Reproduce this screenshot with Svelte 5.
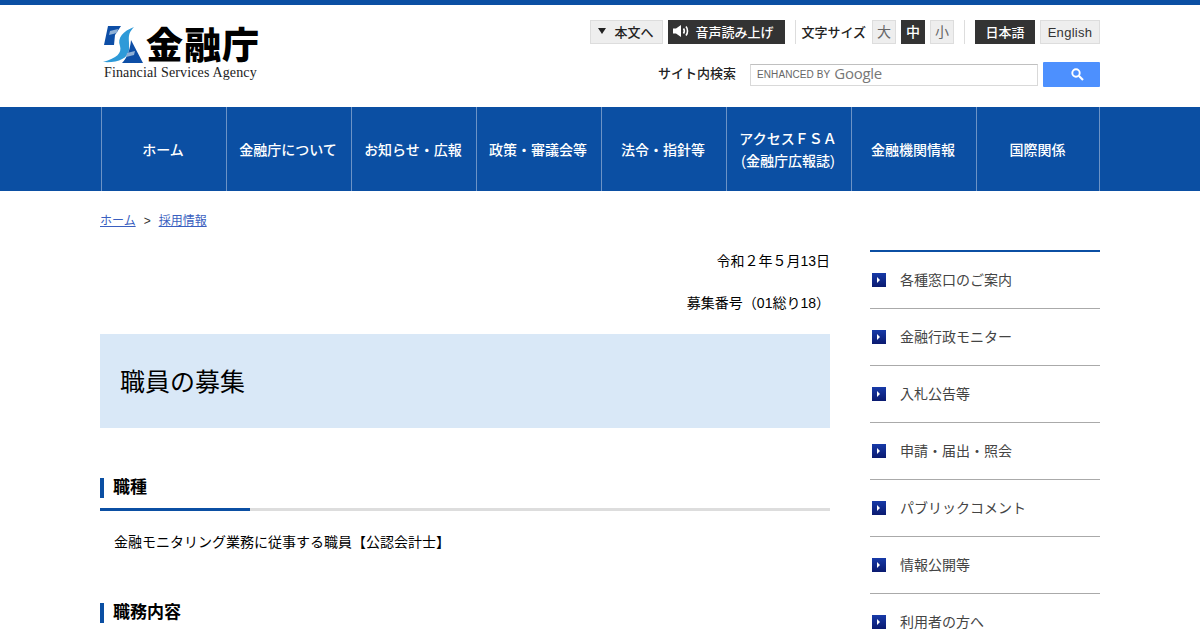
<script>
  const navItems = [
    ['ホーム'],
    ['金融庁について'],
    ['お知らせ・広報'],
    ['政策・審議会等'],
    ['法令・指針等'],
    ['アクセスＦＳＡ', '(金融庁広報誌)'],
    ['金融機関情報'],
    ['国際関係']
  ];

  const sideItems = [
    '各種窓口のご案内',
    '金融行政モニター',
    '入札公告等',
    '申請・届出・照会',
    'パブリックコメント',
    '情報公開等',
    '利用者の方へ'
  ];
</script>

<div class="page">
  <header class="header">
    <div class="logo">
      <svg class="logo-mark" width="42" height="38" viewBox="0 0 42 38">
        <path d="M5 0 H18 L12 9 L11 19 H1 Z" fill="#0d4ea6" />
        <path d="M7 5 L15 3 L14 7 L6 9 Z" fill="#8fb0d6" />
        <path d="M31 1 C20 5 14 12 17 20 C19 27 14 32 0 36 C14 37 25 33 26 24 C27 14 23 9 31 1 Z" fill="#2e9ad8" />
        <path d="M28 14 L40 37 H19 C24 32 27 24 28 14 Z" fill="#0d4ea6" />
        <path d="M24 27 L32 25 L31 29 L23 31 Z" fill="#8fb0d6" />
      </svg>
      <div class="logo-kanji">金融庁</div>
      <div class="logo-en">Financial Services Agency</div>
    </div>

    <div class="tools">
      <div class="tool-row">
        <a class="btn skip"><span class="tri"></span>本文へ</a>
        <a class="btn dark voice">
          <svg width="16" height="12" viewBox="0 0 16 12">
            <path d="M0 3.5 H3 L8 0 V12 L3 8.5 H0 Z" fill="#fff" />
            <path d="M10.5 3.5 C11.5 5 11.5 7 10.5 8.5 M13 1.5 C15 4 15 8 13 10.5" stroke="#fff" stroke-width="1.6" fill="none" />
          </svg>
          音声読み上げ
        </a>
        <div class="size-group">
          <span class="size-label">文字サイズ</span>
          <a class="btn size">大</a>
          <a class="btn size dark">中</a>
          <a class="btn size">小</a>
        </div>
        <div class="lang-group">
          <a class="btn dark lang-ja">日本語</a>
          <a class="btn lang-en">English</a>
        </div>
      </div>
      <div class="search-row">
        <span class="search-label">サイト内検索</span>
        <div class="search-box">
          <span class="enhanced">ENHANCED BY</span>
          <span class="google">Google</span>
        </div>
        <div class="search-btn">
          <svg width="13" height="13" viewBox="0 0 13 13">
            <circle cx="5" cy="5" r="3.7" stroke="#fff" stroke-width="1.9" fill="none" />
            <path d="M8 8 L12 12" stroke="#fff" stroke-width="2.2" />
          </svg>
        </div>
      </div>
    </div>
  </header>

  <nav class="nav">
    <ul class="nav-list">
      {#each navItems as lines}
        <li class="nav-item">
          {#each lines as line}
            <span>{line}</span>
          {/each}
        </li>
      {/each}
    </ul>
  </nav>

  <div class="crumbs">
    <a>ホーム</a><span class="sep">&gt;</span><a>採用情報</a>
  </div>

  <div class="columns">
    <main class="main">
      <p class="meta first">令和２年５月13日</p>
      <p class="meta">募集番号（01総り18）</p>
      <h1 class="title">職員の募集</h1>

      <section class="block">
        <h2 class="sub"><span>職種</span></h2>
        <p class="body">金融モニタリング業務に従事する職員【公認会計士】</p>
      </section>

      <section class="block">
        <h2 class="sub"><span>職務内容</span></h2>
      </section>
    </main>

    <aside class="side">
      <ul class="side-list">
        {#each sideItems as item}
          <li class="side-item">
            <span class="arrow"></span>
            <span class="side-text">{item}</span>
          </li>
        {/each}
      </ul>
    </aside>
  </div>
</div>

<style>
  :global(html), :global(body) {
    margin: 0;
    background: #fff;
    overflow: hidden;
  }

  .page {
    height: 630px;
    overflow: hidden;
    border-top: 5px solid #0b4fa3;
    box-sizing: border-box;
    font-family: "Liberation Sans", Arial, "Noto Sans CJK JP", sans-serif;
    color: #000;
  }

  a {
    text-decoration: none;
  }

  ul {
    list-style: none;
    margin: 0;
    padding: 0;
  }

  .header {
    width: 1000px;
    height: 102px;
    margin: 0 auto;
    display: flex;
    justify-content: space-between;
  }

  .logo {
    width: 160px;
    margin: 21px 0 0 3px;
    display: grid;
    grid-template-columns: 43px 1fr;
    grid-template-rows: 38px auto;
    align-content: start;
    align-items: center;
  }

  .logo-mark {
    display: block;
  }

  .logo-kanji {
    font-size: 37px;
    line-height: 36px;
    margin-top: 3px;
    font-weight: 900;
    letter-spacing: 1px;
    color: #000;
    white-space: nowrap;
  }

  .logo-en {
    grid-column: 1 / 3;
    margin: 2px 0 0 1px;
    font-family: "Liberation Serif", serif;
    font-size: 14px;
    line-height: 14px;
    letter-spacing: 0.14px;
    color: #222;
    white-space: nowrap;
  }

  .tools {
    display: flex;
    flex-direction: column;
    align-items: flex-end;
    padding-top: 15px;
  }

  .tool-row {
    display: flex;
    align-items: center;
    height: 24px;
  }

  .btn {
    display: flex;
    align-items: center;
    justify-content: center;
    box-sizing: border-box;
    height: 24px;
    padding-bottom: 2px;
    font-size: 14px;
    font-weight: 500;
    color: #333;
    background: #eee;
    border: 1px solid #ddd;
    white-space: nowrap;
  }

  .btn.dark {
    background: #333;
    border-color: #333;
    color: #fff;
  }

  .skip {
    width: 73px;
    justify-content: flex-start;
    padding-left: 7px;
    gap: 8px;
    font-size: 13px;
    color: #222;
  }

  .tri {
    width: 0;
    height: 0;
    border-left: 4px solid transparent;
    border-right: 4px solid transparent;
    border-top: 6px solid #222;
  }

  .voice {
    width: 117px;
    margin-left: 5px;
    justify-content: flex-start;
    padding-left: 4px;
    gap: 6px;
    font-size: 13px;
  }

  .size-group {
    display: flex;
    align-items: center;
    height: 24px;
    margin-left: 10px;
    padding-left: 5px;
    border-left: 1px solid #ddd;
  }

  .size-label {
    font-size: 13px;
    font-weight: 500;
    color: #222;
    margin-right: 6px;
    padding-bottom: 2px;
  }

  .size {
    width: 24px;
    margin-right: 5px;
    font-weight: 400;
    color: #666;
  }

  .size.dark {
    font-weight: 500;
  }

  .size:last-child {
    margin-right: 0;
  }

  .lang-group {
    display: flex;
    margin-left: 10px;
    padding-left: 10px;
    border-left: 1px solid #ddd;
  }

  .lang-ja {
    width: 60px;
    font-size: 13px;
  }

  .lang-en {
    width: 60px;
    margin-left: 5px;
    padding-bottom: 0;
    font-size: 13px;
    font-weight: 400;
    letter-spacing: 0.3px;
  }

  .search-row {
    display: flex;
    align-items: center;
    margin-top: 18px;
  }

  .search-label {
    font-size: 13px;
    font-weight: 500;
    color: #222;
    margin-right: 14px;
    padding-bottom: 4px;
  }

  .search-box {
    box-sizing: border-box;
    width: 288px;
    height: 22px;
    border: 1px solid #d9d9d9;
    border-top-color: #c0c0c0;
    display: flex;
    align-items: center;
    padding-left: 6px;
    gap: 4px;
    background: #fff;
  }

  .enhanced {
    font-family: "Liberation Sans", Arial, sans-serif;
    font-size: 10px;
    letter-spacing: 0.1px;
    color: #666;
  }

  .google {
    font-family: "Open Sans", sans-serif;
    font-size: 15px;
    line-height: 18px;
    padding-bottom: 4px;
    letter-spacing: -0.3px;
    color: #777;
  }

  .search-btn {
    box-sizing: border-box;
    width: 57px;
    height: 25px;
    margin-left: 5px;
    padding-left: 28px;
    background: #4d90fe;
    border-radius: 1px;
    display: flex;
    align-items: center;
  }

  .nav {
    background: #0b4fa3;
    height: 84px;
  }

  .nav-list {
    width: 1000px;
    height: 84px;
    margin: 0 auto;
    display: flex;
  }

  .nav-item {
    box-sizing: border-box;
    flex: 0 0 125px;
    display: flex;
    flex-direction: column;
    align-items: center;
    justify-content: center;
    padding: 2px 2px 0 0;
    border-left: 1px solid #6c93c6;
    color: #fff;
    font-size: 14px;
    line-height: 22px;
    font-weight: 500;
    white-space: nowrap;
    transform: translateX(1px);
  }

  .nav-item:last-child {
    flex-basis: 124px;
    padding-right: 1px;
    border-right: 1px solid #6c93c6;
  }

  .crumbs {
    width: 1000px;
    margin: 0 auto;
    padding-top: 22px;
    height: 59px;
    box-sizing: border-box;
    font-size: 12px;
    line-height: 16px;
    color: #333;
  }

  .crumbs a {
    color: #3a5fc0;
    text-decoration: underline;
  }

  .sep {
    margin: 0 8px;
  }

  .columns {
    width: 1000px;
    margin: 0 auto;
    display: flex;
    justify-content: space-between;
    align-items: flex-start;
  }

  .main {
    width: 730px;
  }

  .meta {
    margin: 0 0 21px;
    padding-top: 1px;
    text-align: right;
    font-size: 14px;
    line-height: 20px;
  }

  .title {
    margin: 10px 0 0;
    height: 94px;
    box-sizing: border-box;
    padding: 0 20px;
    background: #d9e8f7;
    font-size: 25px;
    font-weight: 400;
    line-height: 96px;
  }

  .block {
    margin-top: 50px;
  }

  .sub {
    margin: 0;
    padding-bottom: 13px;
    font-size: 17px;
    line-height: 20px;
    font-weight: 700;
    background: linear-gradient(#0b4fa3, #0b4fa3) left bottom / 150px 3px no-repeat,
      linear-gradient(#ddd, #ddd) left bottom / 100% 3px no-repeat;
  }

  .sub span {
    display: block;
    padding-left: 9px;
    border-left: 4px solid #0b4fa3;
  }

  .body {
    margin: 0;
    padding: 21px 14px 0;
    font-size: 14px;
    line-height: 21px;
  }

  .side {
    width: 230px;
    border-top: 2px solid #0b4fa3;
  }

  .side-item {
    box-sizing: border-box;
    height: 57px;
    display: flex;
    align-items: center;
    gap: 14px;
    padding: 0 0 1px 2px;
    border-bottom: 1px solid #aaa;
    font-size: 14px;
    color: #444;
  }

  .side-text {
    padding-bottom: 2px;
  }

  .arrow {
    position: relative;
    width: 14px;
    height: 14px;
    background: linear-gradient(#173aa8, #0a1a70);
  }

  .arrow::after {
    content: '';
    position: absolute;
    left: 5px;
    top: 4px;
    border-left: 3px solid #fff;
    border-top: 3px solid transparent;
    border-bottom: 3px solid transparent;
  }
</style>
